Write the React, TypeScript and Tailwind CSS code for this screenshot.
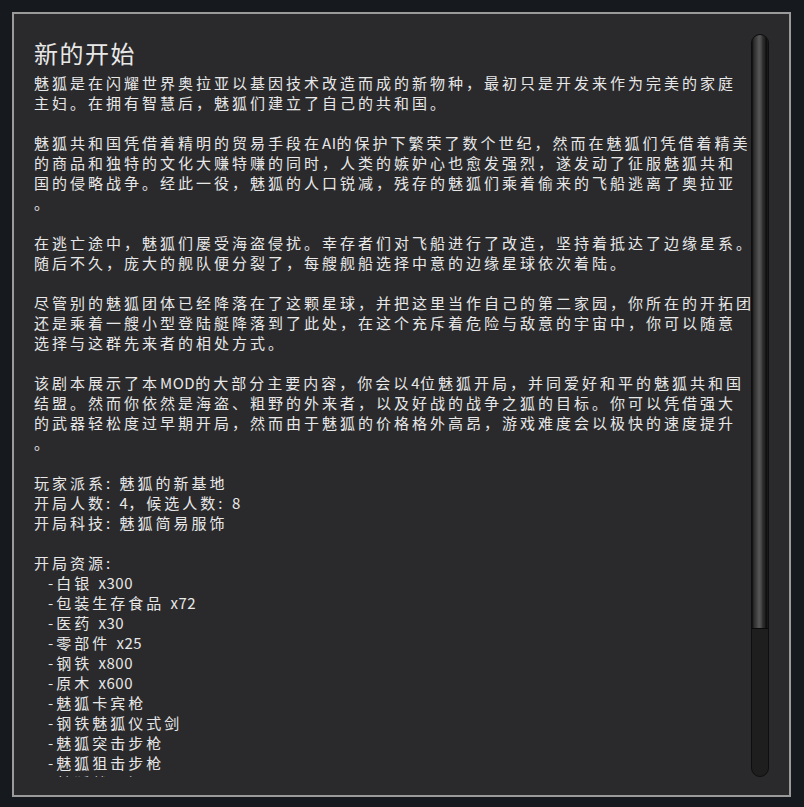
import React from "react";

const paragraphs: string[][] = [
  [
    "魅狐是在闪耀世界奥拉亚以基因技术改造而成的新物种，最初只是开发来作为完美的家庭",
    "主妇。在拥有智慧后，魅狐们建立了自己的共和国。",
  ],
  [
    "魅狐共和国凭借着精明的贸易手段在AI的保护下繁荣了数个世纪，然而在魅狐们凭借着精美",
    "的商品和独特的文化大赚特赚的同时，人类的嫉妒心也愈发强烈，遂发动了征服魅狐共和",
    "国的侵略战争。经此一役，魅狐的人口锐减，残存的魅狐们乘着偷来的飞船逃离了奥拉亚",
    "。",
  ],
  [
    "在逃亡途中，魅狐们屡受海盗侵扰。幸存者们对飞船进行了改造，坚持着抵达了边缘星系。",
    "随后不久，庞大的舰队便分裂了，每艘舰船选择中意的边缘星球依次着陆。",
  ],
  [
    "尽管别的魅狐团体已经降落在了这颗星球，并把这里当作自己的第二家园，你所在的开拓团",
    "还是乘着一艘小型登陆艇降落到了此处，在这个充斥着危险与敌意的宇宙中，你可以随意",
    "选择与这群先来者的相处方式。",
  ],
  [
    "该剧本展示了本MOD的大部分主要内容，你会以4位魅狐开局，并同爱好和平的魅狐共和国",
    "结盟。然而你依然是海盗、粗野的外来者，以及好战的战争之狐的目标。你可以凭借强大",
    "的武器轻松度过早期开局，然而由于魅狐的价格格外高昂，游戏难度会以极快的速度提升",
    "。",
  ],
  ["玩家派系: 魅狐的新基地", "开局人数: 4，候选人数: 8", "开局科技: 魅狐简易服饰"],
];

const resources = [
  "-白银 x300",
  "-包装生存食品 x72",
  "-医药 x30",
  "-零部件 x25",
  "-钢铁 x800",
  "-原木 x600",
  "-魅狐卡宾枪",
  "-钢铁魅狐仪式剑",
  "-魅狐突击步枪",
  "-魅狐狙击步枪",
  "-魅狐战斗短刀",
];

// Latin letters and digits sit tighter than the CJK glyphs around them
function Runs({ text }: { text: string }) {
  const parts = text.split(/([A-Za-z0-9]+)/);
  return (
    <>
      {parts.map((p, i) =>
        /^[A-Za-z0-9]+$/.test(p) ? (
          <span key={i} className="tracking-[0.5px]">
            {p}
          </span>
        ) : (
          <React.Fragment key={i}>{p}</React.Fragment>
        )
      )}
    </>
  );
}

function Line({ text, indent = false }: { text: string; indent?: boolean }) {
  return (
    <div className={`h-[20px] leading-[20px] whitespace-nowrap ${indent ? "pl-[14px]" : ""}`}>
      <Runs text={text} />
    </div>
  );
}

function ScrollBar() {
  return (
    <div className="relative z-10 w-[18px] h-full shrink-0 rounded-full bg-[#1d1e1d] border border-[#0e0e0e] flex flex-col overflow-hidden">
      <div className="h-[594px] shrink-0 rounded-t-full border-b border-[#0a0a0a] bg-[linear-gradient(90deg,#0c0c0c_0px,#2e2e2e_2px,#3b3b3b_4px,#575757_7px,#4a4a4a_9px,#2b2b2b_11px,#222_13px,#0b0b0b_14px,#1c1c1c_16px)]" />
    </div>
  );
}

export default function App() {
  return (
    <div className="w-[804px] h-[807px] bg-[#16191e] p-[12px] font-['Noto_Sans_CJK_SC','Noto_Sans',sans-serif]">
      <div className="w-[779px] h-[785px] border-2 border-[#9a9a9a] bg-[#2a2a2c] pt-[20px] pb-[18px] pl-[20px] pr-[20px] flex">
        {/* text column runs under the scrollbar so the longest lines keep their full width */}
        <div className="flex-1 min-w-0 mr-[-18px] overflow-hidden text-[#e8e8e8]">
          <div className="text-[24px] leading-[38px] tracking-[1.5px] mb-[1px]">新的开始</div>
          <div className="text-[15px] tracking-[3px]">
            {paragraphs.map((p, i) => (
              <div key={i} className="mb-[20px]">
                {p.map((t, j) => (
                  <Line key={j} text={t} />
                ))}
              </div>
            ))}
            <Line text="开局资源:" />
            {resources.map((r, i) => (
              <Line key={i} text={r} indent />
            ))}
          </div>
        </div>
        <ScrollBar />
      </div>
    </div>
  );
}
